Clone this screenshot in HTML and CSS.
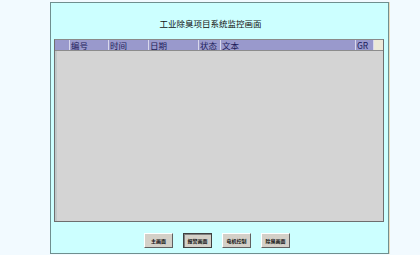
FILE: index.html
```html
<!DOCTYPE html>
<html lang="zh-CN">
<head>
  <meta charset="UTF-8" />
  <title>工业除臭项目系统监控画面</title>
  <link rel="stylesheet" href="styles.css">
</head>
<body>
  <main class="panel">
    <h1 class="panel-title">工业除臭项目系统监控画面</h1>

    <section class="alarm-table">
      <div class="alarm-head">
        <span class="col"></span>
        <span class="col">编号</span>
        <span class="col">时间</span>
        <span class="col">日期</span>
        <span class="col">状态</span>
        <span class="col">文本</span>
        <span class="col">GR</span>
        <span class="col corner"></span>
      </div>
      <div class="alarm-body"></div>
    </section>

    <nav class="nav-buttons">
      <button class="nav-btn">主画面</button>
      <button class="nav-btn active">报警画面</button>
      <button class="nav-btn">电机控制</button>
      <button class="nav-btn">除臭画面</button>
    </nav>
  </main>
</body>
</html>
```

FILE: styles.css
```css
* {
  box-sizing: border-box;
}

body {
  margin: 0;
  background: #f2faff;
  font-family: "Noto Sans CJK SC", "DejaVu Sans", sans-serif;
}

.panel {
  margin: 2px 0 0 50px;
  width: 339px;
  height: 252px;
  background: #ccffff;
  border: 1px solid #6f8f8f;
  box-shadow: 1px 0 0 #e8dcc0;
  padding: 0 4px 0 3px;
  display: flex;
  flex-direction: column;
}

.panel-title {
  margin: 0;
  height: 36px;
  display: flex;
  align-items: center;
  justify-content: center;
  padding: 4px 17px 0 0;
  font-size: 8.5px;
  font-weight: normal;
  color: #111;
}

.alarm-table {
  height: 183px;
  border: 1px solid #6e6e6e;
  border-top-color: #8a8a8a;
  background: #d4d4d4;
  display: flex;
  flex-direction: column;
}

.alarm-head {
  display: grid;
  grid-template-columns: 15px 39px 40px 50px 22px 135px 18px 1fr;
  height: 11px;
  background: #9999cc;
  border-bottom: 1px solid #8c8c8c;
}

.alarm-head .col {
  border-right: 1px solid #d8d8ec;
  font-size: 8.5px;
  line-height: 10px;
  color: #1c1c5a;
  padding-left: 1px;
  overflow: hidden;
  white-space: nowrap;
}

.alarm-head .corner {
  background: #ece9d8;
  border-right: none;
}

.alarm-body {
  flex: 1;
  border-left: 2px solid #c0c8c8;
}

.nav-buttons {
  display: flex;
  gap: 10px;
  padding: 11px 0 0 90px;
}

.nav-btn {
  width: 29px;
  height: 15px;
  padding: 0;
  background: #d4d0c8;
  border: 1px solid;
  border-color: #ffffff #606060 #606060 #ffffff;
  font-family: inherit;
  font-size: 5px;
  font-weight: bold;
  color: #111;
}

.nav-btn.active {
  border: 1px solid #404040;
  box-shadow: inset 1px 1px 0 #808080;
}
```
